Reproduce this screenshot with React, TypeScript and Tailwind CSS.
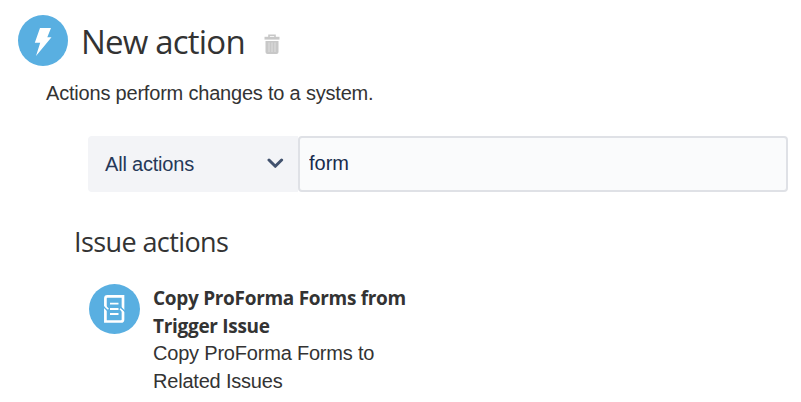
import React from 'react';

interface ActionItem {
  id: string;
  name: string[];
  description: string[];
}

const actions: ActionItem[] = [
  {
    id: 'copy-forms',
    name: ['Copy ProForma Forms from', 'Trigger Issue'],
    description: ['Copy ProForma Forms to', 'Related Issues'],
  },
];

const BoltIcon = () => (
  <svg width="50" height="51" viewBox="0 0 50 51" className="shrink-0">
    <ellipse cx="25" cy="25.5" rx="25" ry="25.5" fill="#59afe1" />
    <path d="M22 13H33L29.3 22.3H33.5L18 41L22.2 27.8H16.8Z" fill="#fff" />
  </svg>
);

const TrashIcon = () => (
  <svg width="16" height="21" viewBox="0 0 16 21">
    <path d="M5 3V1.2H11V3" fill="none" stroke="#c8c8c8" strokeWidth="1.6" />
    <path d="M0.5 2.8H15.5V5.6H0.5Z" fill="#c8c8c8" />
    <path d="M1.5 7H14.5V18Q14.5 20 12.5 20H3.5Q1.5 20 1.5 18Z" fill="#c8c8c8" />
    <path d="M5 8.5V18M8 8.5V18M11 8.5V18" stroke="#dedede" strokeWidth="1" />
  </svg>
);

const FormIcon = () => (
  <svg width="51" height="50" viewBox="0 0 51 50" className="shrink-0">
    <ellipse cx="25.5" cy="25" rx="25.5" ry="25" fill="#59afe1" />
    <path d="M18.4 12.4H34V35.5Q34 37.5 32 37.5H16.4V14.4Q16.4 12.4 18.4 12.4Z" fill="none" stroke="#fff" strokeWidth="2.7" />
    {/* diagonal splits between the two halves of the sheet */}
    <path d="M14.2 22.2L19 27M31.4 23L36.2 27.8" stroke="#59afe1" strokeWidth="1.5" />
    <path d="M16.2 22L19.4 25.2M31 24.8L34.2 28" stroke="#fff" strokeWidth="1.5" />
    <path d="M21 19.6H29.5M21 25H29.5M21 30H29.5" stroke="#fff" strokeWidth="1.8" />
  </svg>
);

const App: React.FC = () => {
  return (
    <div className="h-[402px] w-[801px] overflow-hidden bg-white pt-[15px] font-['Liberation_Sans',Arial,sans-serif] text-xl tracking-[-0.2px] text-[#333]">
      <div className="flex h-[51px] items-center pl-[18px]">
        <BoltIcon />
        <h1 className="ml-[13px] w-[183px] whitespace-nowrap pt-0.5 font-['Open_Sans',sans-serif] text-[33px] leading-[44px] tracking-[-0.8px]">New action</h1>
        <button className="pt-2"><TrashIcon /></button>
      </div>
      <p className="mt-[13px] pl-[46px] leading-7">Actions perform changes to a system.</p>

      <div className="mt-[29px] ml-[88px] flex h-14 w-[700px] text-[#253858]">
        <button className="flex w-[210px] items-center justify-between rounded-l bg-[#f3f4f7] pr-3.5 pl-[17px] tracking-[-0.2px]">
          All actions
          <svg width="18" height="12" viewBox="0 0 18 12">
            <path d="M3 2L9.3 8.3L15.6 2" fill="none" stroke="#42526e" strokeWidth="3" strokeLinecap="round" strokeLinejoin="round" />
          </svg>
        </button>
        <input
          type="text"
          defaultValue="form"
          className="min-w-0 flex-1 rounded border-2 border-[#dfe1e6] bg-[#fafbfc] px-[9px] pb-0.5 tracking-normal text-[#172b4d] outline-none"
        />
      </div>

      <h2 className="mt-[32px] pl-[74px] font-['Open_Sans',sans-serif] text-[27px] leading-9 tracking-[-0.6px]">Issue actions</h2>
      {actions.map((action) => (
        <div key={action.id} className="mt-6 ml-[89px] flex">
          <FormIcon />
          <div className="ml-[13px] whitespace-nowrap leading-7">
            <div className="font-['Open_Sans',sans-serif] text-[19px] font-bold tracking-[-0.3px]">
              {action.name.map((line) => <div key={line}>{line}</div>)}
            </div>
            <div className="-mt-px">
              {action.description.map((line) => <div key={line}>{line}</div>)}
            </div>
          </div>
        </div>
      ))}
    </div>
  );
};

export default App;
